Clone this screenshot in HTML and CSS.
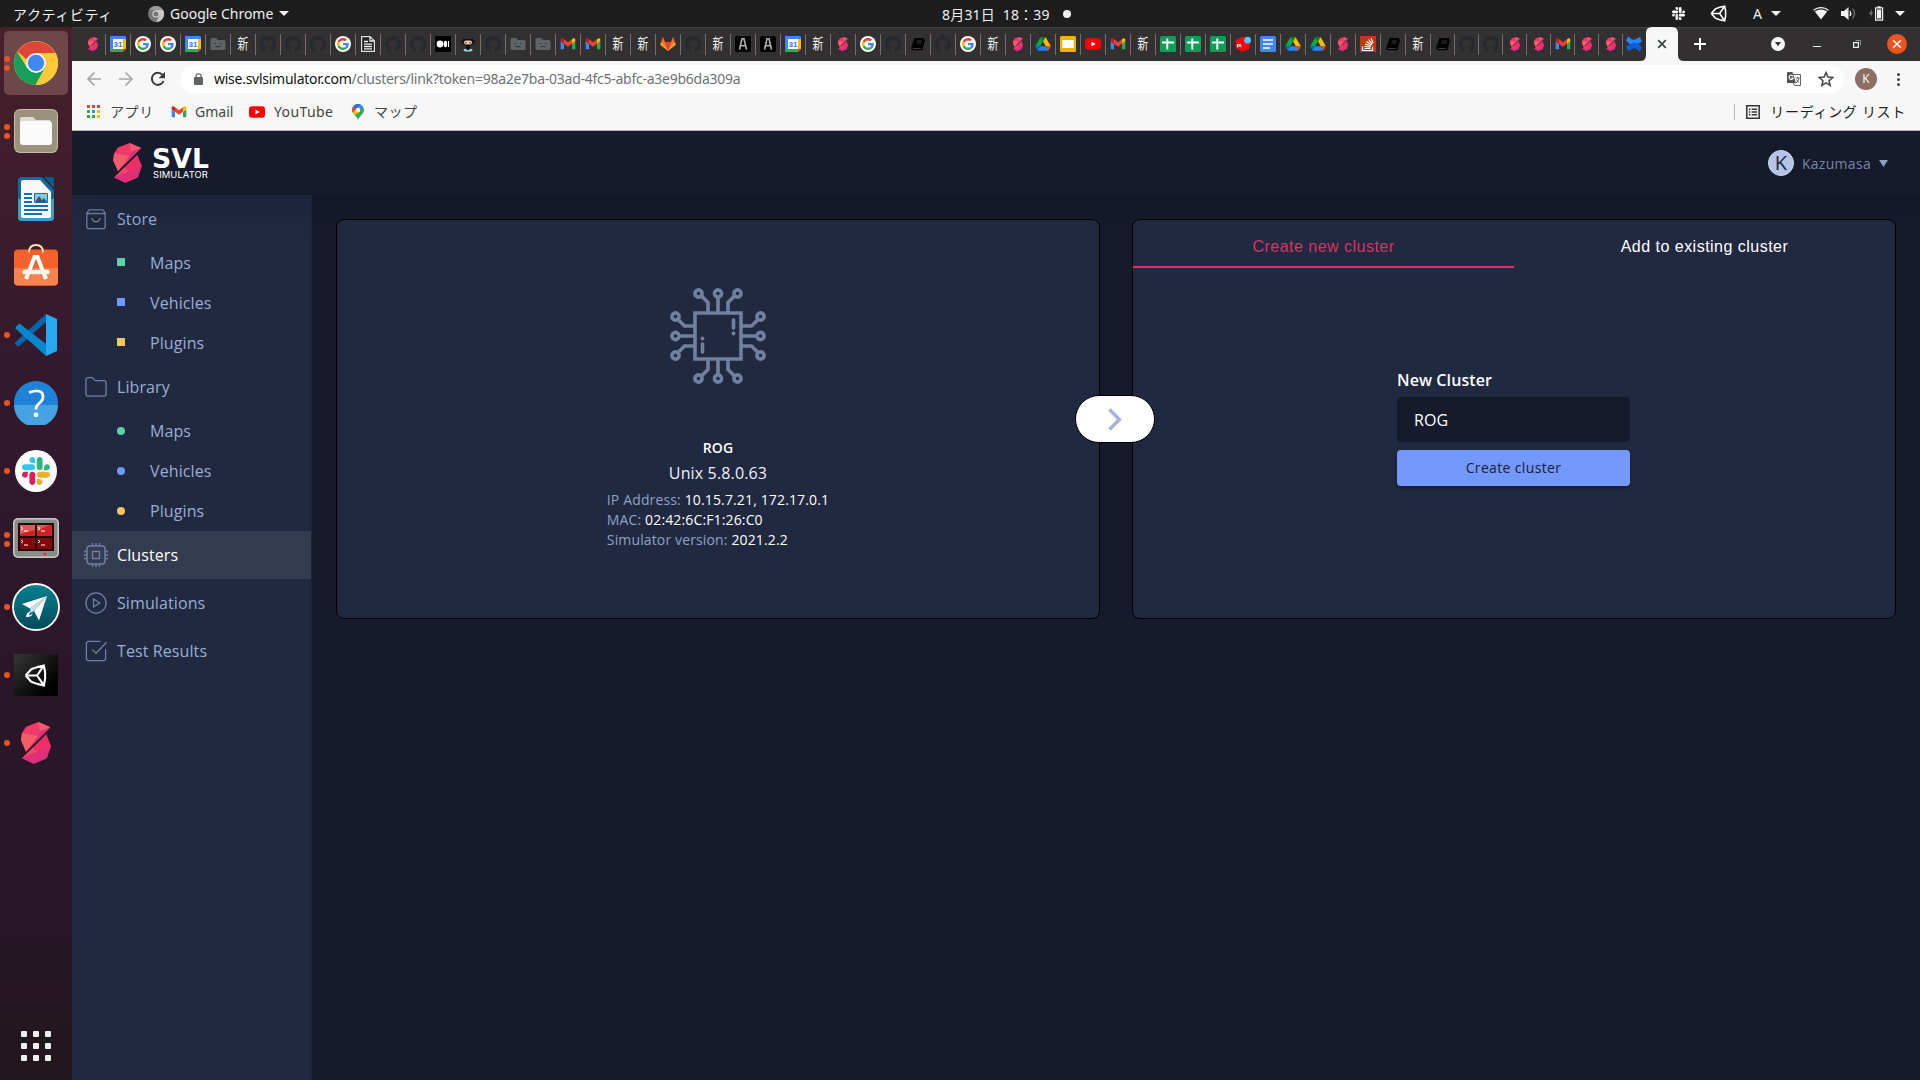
FILE: index.html
```
<!DOCTYPE html>
<html lang="ja">
<head>
<meta charset="utf-8">
<title>SVL Simulator</title>
<link rel="stylesheet" href="styles.css">
</head>
<body>
<svg class="defs" aria-hidden="true">
  <symbol id="svl" viewBox="0 0 30 42">
    <path fill="#f03a68" d="M17.3 0 29.3 5.3 5 29.7 0 18 1 11 5 4.7z"/>
    <path fill="#f25c6b" d="M17.3 0 29.3 5.3 19 9.5zM1 11 17 13.5 5 29.7 0 18z"/>
    <path fill="#d9327c" d="M29.3 5.3 14.5 20.3 19 9.5z"/>
    <path fill="#f02f67" d="M1 36.3 25.3 12.3 30 24 25.7 36.3 12.7 41.7z"/>
    <path fill="#f04868" d="M1 36.3 12 25.5 16 30z"/>
    <path fill="#dd3079" d="M1 36.3 16 30 30 24 25.7 36.3 12.7 41.7z"/>
  </symbol>
  <symbol id="cal" viewBox="0 0 16 16">
    <path fill="#4285f4" d="M1 0h14a1 1 0 0 1 1 1v2H3v10H0V1a1 1 0 0 1 1-1z"/>
    <path fill="#fff" d="M3 3h10v10H3z"/><path fill="#fbbc04" d="M13 3h3v10h-3z"/>
    <path fill="#34a853" d="M0 13h13v3H1a1 1 0 0 1-1-1z"/><path fill="#ea4335" d="M13 13h3l-3 3z"/>
    <text x="8" y="11" font-size="8" font-weight="700" text-anchor="middle" fill="#3275e0">31</text>
  </symbol>
  <symbol id="goo" viewBox="-8 -8 64 64">
    <circle cx="24" cy="24" r="32" fill="#fff"/>
    <path fill="#ea4335" d="M24 9.500c3.540 0 6.710 1.220 9.210 3.600l6.850-6.850C35.900 2.380 30.470 0 24 0 14.620 0 6.510 5.380 2.560 13.220l7.980 6.190C12.430 13.720 17.740 9.500 24 9.500z"/>
    <path fill="#4285f4" d="M46.980 24.550c0-1.570-.150-3.090-.380-4.550H24v9.020h12.940c-.580 2.960-2.260 5.480-4.780 7.180l7.730 6c4.510-4.180 7.090-10.360 7.090-17.650z"/>
    <path fill="#fbbc05" d="M10.530 28.590c-.480-1.450-.760-2.990-.760-4.590s.270-3.140.760-4.590l-7.980-6.190C.920 16.460 0 20.120 0 24c0 3.880.920 7.540 2.560 10.780z"/>
    <path fill="#34a853" d="M24 48c6.480 0 11.930-2.130 15.890-5.810l-7.730-6c-2.150 1.450-4.920 2.300-8.160 2.300-6.260 0-11.570-4.220-13.470-9.910l-7.980 6.190C6.510 42.620 14.620 48 24 48z"/>
  </symbol>
  <symbol id="sad" viewBox="0 0 16 16">
    <path fill="#5f6368" d="M2 2h4l2 2h6a1.500 1.500 0 0 1 1.500 1.500v7A1.500 1.500 0 0 1 14 14H2a1.500 1.500 0 0 1-1.500-1.500v-9A1.500 1.500 0 0 1 2 2z"/>
    <path fill="none" stroke="#333031" d="M4.500 7.500h1.500M10 7.500h1.500M6 11.500V10.500h4v1"/>
  </symbol>
  <symbol id="shin" viewBox="0 0 16 16"><text x="8" y="13.300" font-size="15" text-anchor="middle" fill="#f1f1f1" class="kanji">新</text></symbol>
  <symbol id="git" viewBox="0 0 16 16"><path fill="#24292e" d="M8 0C3.580 0 0 3.580 0 8c0 3.540 2.290 6.530 5.470 7.590.400.070.550-.170.550-.380 0-.190-.010-.820-.010-1.490-2.010.370-2.530-.490-2.690-.940-.090-.230-.480-.940-.820-1.130-.280-.150-.680-.520-.010-.530.630-.010 1.080.580 1.230.820.720 1.210 1.870.870 2.330.660.070-.520.280-.870.510-1.070-1.780-.200-3.640-.890-3.640-3.950 0-.870.310-1.590.820-2.150-.080-.200-.360-1.020.080-2.120 0 0 .670-.210 2.200.820.640-.180 1.320-.270 2-.270s1.360.090 2 .270c1.530-1.040 2.200-.820 2.200-.820.440 1.100.160 1.920.080 2.120.510.560.820 1.270.820 2.150 0 3.070-1.870 3.750-3.650 3.950.290.250.540.730.540 1.480 0 1.070-.010 1.930-.010 2.200 0 .210.150.460.550.380A8.010 8.010 0 0 0 16 8c0-4.420-3.580-8-8-8z"/></symbol>
  <symbol id="doc" viewBox="0 0 16 16"><path fill="#222" stroke="#ddd" stroke-width="1.200" d="M1.600.6h8.400l4.400 4.400v10.400H1.600z"/><path stroke="#eee" stroke-width="1.300" fill="none" d="M10 .6V5h4.400M4 5.500h4M4 8.200h8M4 10.500h8M4 12.800h8"/></symbol>
  <symbol id="med" viewBox="0 0 16 16"><rect width="16" height="16" rx="1" fill="#000"/><circle cx="5" cy="8" r="3.400" fill="#fff"/><ellipse cx="10.500" cy="8" rx="1.700" ry="3.200" fill="#fff"/><path fill="#fff" d="M13 5h1v6h-1z"/></symbol>
  <symbol id="octo" viewBox="0 0 16 16"><path d="M3 2l2 1h6l2-1 .5 4L12 9H4L2.500 6z" fill="#111"/><rect x="4" y="4.500" width="8" height="4" rx="2" fill="#f0c4a8"/><path d="M5.500 6h1v1.500h-1zM9.500 6h1v1.500h-1z" fill="#5a2c1c"/><path d="M6 9h4v4H6z" fill="#111"/><ellipse cx="8" cy="14" rx="4.500" ry="1.500" fill="#8edcf0"/><path d="M6.500 10h3v4h-3z" fill="#111"/><path d="M0 5h3M13 5h3M1 8l2-1M15 8l-2-1" stroke="#111"/></symbol>
  <symbol id="gmail" viewBox="48 38 96 76">
    <path fill="#4285f4" d="M58 108h14V74L52 59v43c0 3.320 2.690 6 6 6"/><path fill="#34a853" d="M120 108h14c3.320 0 6-2.690 6-6V59l-20 15"/><path fill="#fbbc04" d="M120 48v26l20-15v-8c0-7.420-8.470-11.650-14.400-7.200"/><path fill="#ea4335" d="M72 74V48l24 18 24-18v26L96 92"/><path fill="#c5221f" d="M52 51v8l20 15V48l-5.600-4.200c-5.940-4.450-14.400-.220-14.400 7.200"/>
  </symbol>
  <symbol id="lab" viewBox="0 0 16 16"><path fill="#fc6d26" d="M.2 8.500 3 1l2 5h6l2-5 2.800 7.500L8 15z"/><path fill="#e24329" d="M5 6h6l-3 9z"/><path fill="#fca326" d="M.2 8.500 2 6l6 9zM15.800 8.500 14 6l-6 9z"/></symbol>
  <symbol id="aa" viewBox="0 0 16 16"><rect width="16" height="16" rx="2" fill="#000"/><path d="M4.500 13.500 7 2.700h2l2.500 10.800M5.500 9.700h5" fill="none" stroke="#aeb2b4" stroke-width="1.600"/></symbol>
  <symbol id="book" viewBox="0 0 16 16"><path d="M5.200 2h9l-2.500 10H3z"/><path d="M5.200 2 2 11.500q-.300 2 1.500 2h8.200l2.800-10" fill="none" stroke="#000" stroke-width="1.400"/><path stroke="#444" stroke-width=".8" d="M7 5h5M6.500 7h5M3.500 12.500h7"/></symbol>
  <symbol id="drive" viewBox="-2 -6 91.300 91">
    <path fill="#0066da" d="m6.600 66.850 3.850 6.650c.8 1.400 1.950 2.500 3.300 3.300l13.750-23.800H0c0 1.550.4 3.100 1.200 4.500z"/><path fill="#00ac47" d="M43.650 25 29.900 1.200c-1.350.8-2.500 1.900-3.300 3.300l-25.400 44A9.060 9.060 0 0 0 0 53h27.500z"/><path fill="#ea4335" d="M73.550 76.800c1.350-.8 2.500-1.900 3.300-3.300l9.250-16c.8-1.400 1.200-2.950 1.200-4.500H59.800l5.850 11.500z"/><path fill="#00832d" d="M43.650 25 57.400 1.200C56.050.4 54.500 0 52.900 0H34.400c-1.600 0-3.150.45-4.500 1.200z"/><path fill="#2684fc" d="M59.800 53H27.500L13.750 76.800c1.350.8 2.900 1.200 4.500 1.200h50.800c1.600 0 3.150-.45 4.500-1.200z"/><path fill="#ffba00" d="M73.400 26.500 60.700 4.500c-.8-1.400-1.950-2.500-3.300-3.300L43.650 25 59.800 53h27.450c0-1.550-.4-3.100-1.200-4.500z"/>
  </symbol>
  <symbol id="slides" viewBox="0 0 16 16"><rect width="16" height="16" rx="1.500" fill="#f4b400"/><path fill="#fff" d="M2.300 4h11.400v8H2.300z"/></symbol>
  <symbol id="yt" viewBox="0 0 16 16"><rect y="2.200" width="16" height="11.600" rx="3" fill="#f00"/><path fill="#fff" d="m6.500 5.500 4.200 2.500-4.200 2.500z"/></symbol>
  <symbol id="sheet" viewBox="0 0 16 16"><rect width="16" height="16" rx="1.500" fill="#0f9d58"/><path stroke="#fff" stroke-width="1.900" d="M2 6.500h12M7.300 2.500v11"/></symbol>
  <symbol id="merc" viewBox="0 0 16 16"><path fill="#ff0211" d="M7.500.5 14.500 4v8.500l-7 3.500L.5 12V4z"/><path fill="none" stroke="#fff" d="M2.500 11.500V8.500q1.500-1 1.700.5v2m0-2q1.500-1.500 1.700.3v2"/><circle cx="12.600" cy="4.200" r="3.400" fill="#4dc9ff"/></symbol>
  <symbol id="gdoc" viewBox="0 0 16 16"><rect width="16" height="16" rx="1.500" fill="#4285f4"/><path stroke="#fff" stroke-width="1.700" d="M3 4h10M3 8h10M3 12h7"/></symbol>
  <symbol id="so" viewBox="0 0 16 16"><path fill="#c23616" d="M0 0h16v16H0z"/><path fill="none" stroke="#fff" stroke-width="1.200" d="M2.500 10.500v4h10v-4M4.500 12.500h6M4.500 10.500l6 .7M5 8l5.800 2M6.500 5.500l5 3.500M8.500 3.500l3.700 4.700M11 2l2 5"/></symbol>
  <symbol id="conf" viewBox="0 0 16 16"><path fill="#2684ff" d="M2.500.3Q5.500 5 9 3.500L14 1l2 4.700-6 3Q4.500 11 0 4.300z"/><path fill="#0a5fdc" d="M13.500 15.700Q10.500 11 7 12.500L2 15 0 10.300l6-3Q11.500 5 16 11.700z"/></symbol>
  <symbol id="slack" viewBox="0 0 122.800 122.800">
    <path class="s1" d="M25.800 77.600c0 7.100-5.800 12.900-12.900 12.900S0 84.700 0 77.600s5.800-12.900 12.900-12.900h12.900v12.900zm6.500 0c0-7.100 5.800-12.900 12.900-12.900s12.900 5.800 12.900 12.900v32.300c0 7.100-5.800 12.900-12.900 12.900s-12.900-5.800-12.900-12.900V77.600z"/><path class="s2" d="M45.200 25.800c-7.100 0-12.900-5.800-12.900-12.900S38.100 0 45.200 0s12.900 5.800 12.900 12.900v12.900H45.200zm0 6.500c7.100 0 12.900 5.800 12.900 12.900s-5.800 12.900-12.900 12.900H12.900C5.800 58.100 0 52.300 0 45.200s5.800-12.900 12.900-12.900h32.300z"/><path class="s3" d="M97 45.200c0-7.100 5.800-12.900 12.900-12.900s12.900 5.800 12.900 12.900-5.800 12.900-12.900 12.900H97V45.200zm-6.500 0c0 7.100-5.800 12.900-12.900 12.900s-12.900-5.800-12.900-12.900V12.900C64.700 5.800 70.500 0 77.600 0s12.900 5.800 12.900 12.900v32.300z"/><path class="s4" d="M77.600 97c7.100 0 12.900 5.800 12.900 12.900s-5.800 12.900-12.900 12.900-12.900-5.800-12.900-12.900V97h12.900zm0-6.500c-7.100 0-12.900-5.800-12.900-12.900s5.800-12.900 12.900-12.900h32.300c7.100 0 12.900 5.800 12.900 12.900s-5.800 12.900-12.900 12.900H77.600z"/>
  </symbol>
  <symbol id="unity" viewBox="0 0 22 22"><path fill="none" stroke="#fff" stroke-width="2" d="M1.500 11 7 5l5.500-2M1.500 11 7 17l5.500 2M12.500 3l6.500-1.500 1.200 6.500v6L19 20.500 12.500 19M1.500 11h11l6.500-9.500M12.500 11l6.500 9.500"/></symbol>
  <symbol id="down" viewBox="0 0 10 5"><path fill="#f2f2f2" d="M0 0h10L5 5z"/></symbol>
</svg>

<header class="topbar">
  <span class="activities">アクティビティ</span>
  <svg class="tb-chrome" viewBox="0 0 16 16"><circle cx="8" cy="8" r="8" fill="#777"/><path fill="#c8c8c8" d="M8 4h7A8 8 0 0 1 8 16l3.500-6z"/><path fill="#999" d="M1 4a8 8 0 0 1 14 0H8z"/><circle cx="8" cy="8" r="3.600" fill="#ddd"/><circle cx="8" cy="8" r="2.600" fill="#777"/></svg>
  <span class="appname">Google Chrome</span>
  <svg class="tri"><use href="#down"/></svg>
  <span class="clock">8月31日&nbsp; 18：39</span>
  <i class="notify"></i>
  <div class="tray">
    <svg class="t-slack"><use href="#slack"/></svg>
    <svg class="t-unity"><use href="#unity"/></svg>
    <span class="t-a">A</span>
    <svg class="tri t-tri1"><use href="#down"/></svg>
    <svg class="t-wifi" viewBox="0 0 16 13"><path fill="#f2f2f2" d="M1.800 4.500Q8 .5 14.200 4.500L8 12.500z"/><path fill="none" stroke="#f2f2f2" stroke-width="1.200" d="M.5 3.200Q8-2 15.500 3.200"/></svg>
    <svg class="t-vol" viewBox="0 0 15 13"><path fill="#f2f2f2" d="M0 4h3l4.500-4v13L3 9H0z"/><path fill="none" stroke="#f2f2f2" stroke-width="1.300" d="M9 4q1.600 2.500 0 5"/><path fill="none" stroke="#777" stroke-width="1.200" d="M11.500 1.500q4 5 0 10"/></svg>
    <svg class="t-bat" viewBox="0 0 15 15"><path fill="#777" d="M3 3 0 8h2l-1 4 3-5.500H2.500z"/><path fill="none" stroke="#f2f2f2" stroke-width="1.200" d="M6.600 1.800h7v12.400h-7zM8.500.8h3.200"/><path fill="#f2f2f2" d="M8 3.500h4.200v9H8z"/></svg>
    <svg class="tri"><use href="#down"/></svg>
  </div>
</header>

<div class="desktop">
<nav class="dock">
  <div class="app active"><i class="run two"></i><svg width="44" height="44" viewBox="0 0 44 44"><circle cx="22" cy="22" r="22" fill="#fdc93a"/><path fill="#e0453a" d="M3.500 10.500A22 22 0 0 1 41.200 12H22L12 18z"/><path fill="#169f5b" d="M3.200 10.800A22 22 0 0 0 21.500 44L31 27 22 32 13 27z"/><path fill="#fdc93a" d="M22 12h19.600A22 22 0 0 1 21.500 44L31 27z"/><circle cx="22" cy="22" r="10" fill="#f4f4f4"/><circle cx="22" cy="22" r="8.200" fill="#4387f5"/></svg></div>
  <div class="app"><i class="run two"></i><svg width="44" height="44" viewBox="0 0 44 44"><rect width="44" height="44" rx="6" fill="#c4bda8"/><rect x="1" y="1" width="42" height="42" rx="5" fill="#9a927e"/><path fill="#dedad0" d="M8 8h11l3 3h14v8H6v-9q0-2 2-2z"/><rect x="6" y="12" width="32" height="24" rx="3" fill="#fbfafa"/></svg></div>
  <div class="app"><svg width="36" height="44" viewBox="0 0 36 44"><path fill="#0d6d9f" d="M4 0h20l12 13v27q0 4-4 4H4q-4 0-4-4V4q0-4 4-4z"/><path fill="#3b9fcb" d="M0 22h36v18q0 4-4 4H4q-4 0-4-4z"/><path fill="#f8f8f8" d="M5 3h17l11 12v24q0 2-2 2H5q-2 0-2-2V5q0-2 2-2z"/><path fill="#0a5d8c" d="M26 0h8q2 0 2 2v9z"/><path stroke="#1272b0" stroke-width="2" d="M6 17h8M6 21h8M6 25h8M6 29h24M6 33h24M6 37h18"/><path fill="#80c9ef" stroke="#1272b0" d="M16.500 16.500h13v9h-13z"/><path fill="#44565f" d="m17 25 4-6 3 4 2-2 3 4z"/><path fill="#f0c02c" d="M26 17h3v3z"/></svg></div>
  <div class="app"><svg class="soft" width="44" height="42" viewBox="0 0 44 42"><rect y="5.500" width="44" height="36" rx="4" fill="#f5612a"/><path fill="#f88150" d="M0 24h44v13.500q0 4-4 4H4q-4 0-4-4z"/><path fill="none" stroke="#ffe0b5" stroke-width="1.800" d="M15 8.500Q15 1 22 1t7 7.500"/><path fill="none" stroke="#fff" stroke-width="4" d="m12 35 8.500-22h3L32 35"/><path stroke="#fff4ec" stroke-width="4.600" stroke-linecap="round" d="M10.500 28h23"/></svg></div>
  <div class="app"><i class="run"></i><svg width="42" height="42" viewBox="0 0 42 42"><path fill="#0065a9" d="M0 28.500q-.5 1 .5 2l3 2.300L31 8V0z"/><path fill="#0788cc" d="m1 12.500 3.500-3L31 30v12L.5 14.500z"/><path fill="#27a9f2" d="m31 0 11 5v32l-11 5z"/></svg></div>
  <div class="app"><i class="run"></i><svg width="44" height="44" viewBox="0 0 44 44"><circle cx="22" cy="22" r="22" fill="#2081d8"/><path fill="#46a2e2" d="M0 24h44a22 22 0 0 1-44 0z"/><path fill="none" stroke="#fff" stroke-width="2.800" d="M15 11.500q14-4.500 14 4 0 4-4.500 7.500-2.500 2-2.500 5.500"/><circle cx="22" cy="33.800" r="2.400" fill="#fff"/></svg></div>
  <div class="app"><i class="run"></i><span class="slackdisc"><svg width="28" height="28"><use href="#slack"/></svg></span></div>
  <div class="app"><i class="run two"></i><svg class="term" width="46" height="40" viewBox="0 0 46 40"><rect width="46" height="40" rx="5" fill="#c9c9c5"/><rect x="1.500" y="1.500" width="43" height="37" rx="4" fill="#8b8c87"/><path fill="#240505" d="M5 5h36v28H5z"/><path fill="#cf2323" d="M7 7h15v11H7zM24 7h15v11H24z"/><path fill="#850808" d="M7 20h15v11H7zM24 20h15v11H24z"/><path fill="#e25757" d="M7 7h15v5L7 16zM24 7h12l-12 6z"/><path fill="none" stroke="#fff" d="m8 9 2 1.500L8 12M11 13h4M25 9l2 1.500-2 1.500M28 13h4M8 22l2 1.500L8 25M11 27h4M25 22l2 1.500-2 1.500M28 27h4"/><circle cx="32" cy="36" r="1.300" fill="#e22"/></svg></div>
  <div class="app"><i class="run"></i><svg width="48" height="48" viewBox="0 0 48 48"><defs><linearGradient id="teal" x2="0" y2="1"><stop stop-color="#078290"/><stop offset="1" stop-color="#034a58"/></linearGradient></defs><circle cx="24" cy="24" r="23" fill="url(#teal)" stroke="#fff" stroke-width="1.800"/><path fill="#fff" d="M35 13 10 21l8 4.500zM35 13 22 28l5 9.500z"/><path fill="#c7dfe2" d="M35 13 18 25.500l.5 4.500 3.500-2z"/><path fill="#fff" d="M14 34q0-4 4.500-6l-1.500 4.500 4-2q-2 4-7 3.500z"/></svg></div>
  <div class="app"><i class="run"></i><span class="unitybox"><svg width="23" height="23"><use href="#unity"/></svg></span></div>
  <div class="app"><i class="run"></i><svg width="30" height="42"><use href="#svl"/></svg></div>
  <div class="launcher"><i></i><i></i><i></i><i></i><i></i><i></i><i></i><i></i><i></i></div>
</nav>

<div class="browser">
  <div class="tabstrip">
    <b class="tab"><svg class="sm"><use href="#svl"/></svg></b><b class="tab"><svg><use href="#cal"/></svg></b><b class="tab"><svg><use href="#goo"/></svg></b><b class="tab"><svg><use href="#goo"/></svg></b><b class="tab"><svg><use href="#cal"/></svg></b><b class="tab"><svg><use href="#sad"/></svg></b><b class="tab"><svg><use href="#shin"/></svg></b><b class="tab"><svg><use href="#git"/></svg></b><b class="tab"><svg><use href="#git"/></svg></b><b class="tab"><svg><use href="#git"/></svg></b>
    <b class="tab"><svg><use href="#goo"/></svg></b><b class="tab"><svg><use href="#doc"/></svg></b><b class="tab"><svg><use href="#git"/></svg></b><b class="tab"><svg><use href="#git"/></svg></b><b class="tab"><svg><use href="#med"/></svg></b><b class="tab"><svg><use href="#octo"/></svg></b><b class="tab"><svg><use href="#git"/></svg></b><b class="tab"><svg><use href="#sad"/></svg></b><b class="tab"><svg><use href="#sad"/></svg></b><b class="tab"><svg><use href="#gmail"/></svg></b>
    <b class="tab"><svg><use href="#gmail"/></svg></b><b class="tab"><svg><use href="#shin"/></svg></b><b class="tab"><svg><use href="#shin"/></svg></b><b class="tab"><svg><use href="#lab"/></svg></b><b class="tab"><svg><use href="#git"/></svg></b><b class="tab"><svg><use href="#shin"/></svg></b><b class="tab"><svg><use href="#aa"/></svg></b><b class="tab"><svg><use href="#aa"/></svg></b><b class="tab"><svg><use href="#cal"/></svg></b><b class="tab"><svg><use href="#shin"/></svg></b>
    <b class="tab"><svg class="sm"><use href="#svl"/></svg></b><b class="tab"><svg><use href="#goo"/></svg></b><b class="tab"><svg><use href="#git"/></svg></b><b class="tab"><svg><use href="#book"/></svg></b><b class="tab"><svg><use href="#git"/></svg></b><b class="tab"><svg><use href="#goo"/></svg></b><b class="tab"><svg><use href="#shin"/></svg></b><b class="tab"><svg class="sm"><use href="#svl"/></svg></b><b class="tab"><svg><use href="#drive"/></svg></b><b class="tab"><svg><use href="#slides"/></svg></b>
    <b class="tab"><svg><use href="#yt"/></svg></b><b class="tab"><svg><use href="#gmail"/></svg></b><b class="tab"><svg><use href="#shin"/></svg></b><b class="tab"><svg><use href="#sheet"/></svg></b><b class="tab"><svg><use href="#sheet"/></svg></b><b class="tab"><svg><use href="#sheet"/></svg></b><b class="tab"><svg><use href="#merc"/></svg></b><b class="tab"><svg><use href="#gdoc"/></svg></b><b class="tab"><svg><use href="#drive"/></svg></b><b class="tab"><svg><use href="#drive"/></svg></b>
    <b class="tab"><svg class="sm"><use href="#svl"/></svg></b><b class="tab"><svg><use href="#so"/></svg></b><b class="tab"><svg><use href="#book"/></svg></b><b class="tab"><svg><use href="#shin"/></svg></b><b class="tab n"><svg><use href="#book"/></svg></b><b class="tab n"><svg><use href="#git"/></svg></b><b class="tab n"><svg><use href="#git"/></svg></b><b class="tab n"><svg class="sm"><use href="#svl"/></svg></b><b class="tab n"><svg class="sm"><use href="#svl"/></svg></b><b class="tab n"><svg><use href="#gmail"/></svg></b>
    <b class="tab n"><svg class="sm"><use href="#svl"/></svg></b><b class="tab n"><svg class="sm"><use href="#svl"/></svg></b><b class="tab last"><svg><use href="#conf"/></svg></b>
    <div class="tab-active"><svg width="44" height="34" viewBox="0 0 44 34"><path fill="#f7f7f7" d="M0 34q6 0 6-6V6q0-6 6-6h20q6 0 6 6v22q0 6 6 6z"/><path stroke="#3c4043" stroke-width="1.700" d="m18.200 13.200 7.600 7.600m0-7.600-7.600 7.600"/></svg></div>
    <svg class="plus" viewBox="0 0 12 12"><path stroke="#fff" stroke-width="2" d="M6 0v12M0 6h12"/></svg>
    <div class="winctl">
      <svg class="w-search" viewBox="0 0 14 14"><circle cx="7" cy="7" r="7" fill="#f7f7f7"/><path fill="#333" d="M4 5h6L7 9.200z"/></svg>
      <i class="w-min"></i>
      <svg class="w-max" viewBox="0 0 8 8"><path fill="none" stroke="#eee" stroke-width="1.200" d="M.6 2.600h4.800v4.800H.6z"/><path fill="none" stroke="#aaa" stroke-width=".8" d="M2.500.5h5v5"/></svg>
      <svg class="w-close" viewBox="0 0 20 20"><circle cx="10" cy="10" r="10" fill="#e95420"/><path stroke="#fff" stroke-width="1.500" d="m6.200 6.200 7.600 7.600m0-7.600-7.600 7.600"/></svg>
    </div>
  </div>

  <div class="toolbar">
    <svg class="nav-i" viewBox="0 0 16 16"><path fill="none" stroke="#a5a5a5" stroke-width="1.700" d="M15 8H2M8.500 1.500 2 8l6.500 6.500"/></svg>
    <svg class="nav-i" viewBox="0 0 16 16"><path fill="none" stroke="#a5a5a5" stroke-width="1.700" d="M1 8h13M7.500 1.500 14 8l-6.500 6.500"/></svg>
    <svg class="nav-i" viewBox="0 0 16 16"><path fill="none" stroke="#3c3c3c" stroke-width="2" d="M13.500 10A6 6 0 1 1 12.500 4"/><path fill="#3c3c3c" d="M15 .8v6.400H8.600z"/></svg>
    <div class="omnibox">
      <svg class="lock" viewBox="0 0 9 12"><rect y="4" width="9" height="8" rx="1" fill="#5f6368"/><path fill="none" stroke="#5f6368" stroke-width="1.200" d="M2 5V2.800q0-2 2.500-2T7 2.800V5"/></svg>
      <span class="url"><em>wise.svlsimulator.com</em>/clusters/link?token=98a2e7ba-03ad-4fc5-abfc-a3e9b6da309a</span>
      <svg class="trans" viewBox="0 0 14 14"><path fill="none" stroke="#666" d="M5 2.500h8.500v11H7.500L6 11"/><path fill="#555" d="M.5 0h5l3.500 11H.5q-.5 0-.5-.5V.5z"/><path fill="none" stroke="#fff" stroke-width="1.100" d="M6 4q-3-2-4 1.200Q3.500 9 6 6.500V6H4.300"/><path fill="none" stroke="#666" d="M8.500 6h4M10.500 5v1M9 11q3-2 3-5M9.500 7.500l2.500 3"/></svg>
      <svg class="star" viewBox="0 0 24 24"><path fill="none" stroke="#4a4a4a" stroke-width="2.400" d="m12 2.500 2.900 6.600 7.100.7-5.400 4.700 1.600 7-6.200-3.700L5.800 21.500l1.600-7L2 9.800l7.100-.7z"/></svg>
    </div>
    <span class="profile">K</span>
    <span class="kebab"><i></i><i></i><i></i></span>
  </div>

  <div class="bookmarks">
    <svg class="b-apps" viewBox="0 0 13 13"><path fill="#ea4335" d="M0 0h3v3H0zM5 0h3v3H5zM10 0h3v3h-3z"/><path fill="#34a853" d="M0 5h3v3H0zM0 10h3v3H0zM5 10h3v3H5z"/><path fill="#4285f4" d="M5 5h3v3H5z"/><path fill="#fbbc04" d="M10 5h3v3h-3zM10 10h3v3h-3z"/></svg>
    <span class="b-t1">アプリ</span>
    <svg class="b-ic"><use href="#gmail"/></svg><span class="b-t2">Gmail</span>
    <svg class="b-ic"><use href="#yt"/></svg><span class="b-t3">YouTube</span>
    <svg class="b-map" viewBox="0 0 12 16"><path fill="#34a853" d="M0 6a6 6 0 0 1 12 0c0 4-4 5-6 10C5 11.500 0 10 0 6z"/><path fill="#4285f4" d="M4 .4A6 6 0 0 1 11.300 3.200L7 8z"/><path fill="#1a73e8" d="M1.300 2.200 4.500 5 8 .4Q4-.8 1.300 2.200z"/><path fill="#ea4335" d="M1.300 2.200Q-.7 5 .6 8.500L4.500 5z"/><path fill="#fbbc04" d="M.6 8.500 2.800 11 8.500 7.500 4.500 5z"/><circle cx="6" cy="6" r="2.200" fill="#fff"/></svg>
    <span class="b-t4">マップ</span>
    <div class="reading"><svg viewBox="0 0 14 14"><path fill="none" stroke="#333" stroke-width="1.500" d="M.8.8h12.400v12.400H.8z"/><path stroke="#333" stroke-width="1.400" d="M3 4.200h1.500M3 7h1.500M3 9.800h1.500M5.700 4.200H11M5.700 7H11M5.700 9.800H11"/></svg><span>リーディング リスト</span></div>
  </div>

  <div class="page">
    <header class="head">
      <svg class="logo" width="96" height="40" viewBox="0 0 96 40">
        <svg width="29" height="40"><use href="#svl"/></svg>
        <text x="39" y="24.500" class="lg-a" textLength="57" lengthAdjust="spacingAndGlyphs">SVL</text>
        <text x="40" y="35" class="lg-b" textLength="55" lengthAdjust="spacingAndGlyphs">SIMULATOR</text>
      </svg>
      <div class="user"><span class="av">K</span><span class="uname">Kazumasa</span><svg viewBox="0 0 9 7"><path fill="#8e9dc4" d="M0 0h9L4.500 7z"/></svg></div>
    </header>
    <div class="body">
      <aside class="side">
        <a class="item"><svg viewBox="0 0 24 24"><path d="M4.500 2h15L22 5.500V20a2.500 2.500 0 0 1-2.500 2.500h-15A2.500 2.500 0 0 1 2 20V5.500zM2 6h20M7.500 11q1 4 4.500 4t4.500-4"/></svg>Store</a>
        <a class="sub"><i class="g"></i>Maps</a><a class="sub"><i class="b"></i>Vehicles</a><a class="sub"><i class="y"></i>Plugins</a>
        <a class="item"><svg viewBox="0 0 24 24"><path d="M1 4a2.300 2.300 0 0 1 2.300-2.300H8L11 5h9.700A2.300 2.300 0 0 1 23 7.300v12.400a2.300 2.300 0 0 1-2.300 2.300H3.300A2.300 2.300 0 0 1 1 19.700z"/></svg>Library</a>
        <a class="sub"><i class="g r"></i>Maps</a><a class="sub"><i class="b r"></i>Vehicles</a><a class="sub"><i class="y r"></i>Plugins</a>
        <a class="item on"><svg viewBox="0 0 24 24"><path d="M6 3h12a3 3 0 0 1 3 3v12a3 3 0 0 1-3 3H6a3 3 0 0 1-3-3V6a3 3 0 0 1 3-3zM8.500 8.500h7v7h-7zM8.500 0v3M12 0v3M15.500 0v3M8.500 21v3M12 21v3M15.500 21v3M0 8.500h3M0 12h3M0 15.500h3M21 8.500h3M21 12h3M21 15.500h3"/></svg>Clusters</a>
        <a class="item"><svg viewBox="0 0 24 24"><circle cx="12" cy="12" r="11"/><path d="M9.300 7.500v9l6.700-4.500z"/></svg>Simulations</a>
        <a class="item"><svg viewBox="0 0 24 24"><path d="M17 1.500H4A2.500 2.500 0 0 0 1.500 4v16A2.500 2.500 0 0 0 4 22.500h16a2.500 2.500 0 0 0 2.500-2.500v-10M8 10.500l4 4L23.500 2.500"/></svg>Test Results</a>
      </aside>
      <main class="main">
        <section class="card info">
          <svg class="chip" viewBox="0 0 96 96"><g fill="none" stroke="#71809f" stroke-width="3.600"><path d="M25 25h46v46H25zM48 9v16M48 71v16M9 48h16M71 48h16M38 25V14.500l-6.500-6.500M58 25V14.500l6.500-6.500M38 71v10.500L31.500 88M58 71v10.500l6.500 6.500M25 38H14.500L8 31.500M25 58H14.500L8 64.500M71 38h10.500l6.500-6.500M71 58h10.500l6.500 6.500"/><path stroke-linecap="round" d="M63.500 32v8M32.500 56v8"/></g><g fill="#202940" stroke="#71809f" stroke-width="3.600"><circle cx="28.500" cy="5.500" r="3.600"/><circle cx="48" cy="5.500" r="3.600"/><circle cx="67.500" cy="5.500" r="3.600"/><circle cx="28.500" cy="90.500" r="3.600"/><circle cx="48" cy="90.500" r="3.600"/><circle cx="67.500" cy="90.500" r="3.600"/><circle cx="5.500" cy="28.500" r="3.600"/><circle cx="5.500" cy="48" r="3.600"/><circle cx="5.500" cy="67.500" r="3.600"/><circle cx="90.500" cy="28.500" r="3.600"/><circle cx="90.500" cy="48" r="3.600"/><circle cx="90.500" cy="67.500" r="3.600"/></g><g fill="#71809f"><circle cx="63.500" cy="45.500" r="1.900"/><circle cx="32.500" cy="50.500" r="1.900"/></g></svg>
          <h2>ROG</h2>
          <p class="os">Unix 5.8.0.63</p>
          <dl><div>IP Address: <b>10.15.7.21, 172.17.0.1</b></div><div>MAC: <b>02:42:6C:F1:26:C0</b></div><div>Simulator version: <b>2021.2.2</b></div></dl>
          <span class="pill"><svg width="14" height="23" viewBox="0 0 14 23"><path fill="none" stroke="#a5b5dc" stroke-width="3.600" d="M1.500 1.500 11.300 11.500 1.500 21.500"/></svg></span>
        </section>
        <section class="card">
          <div class="tabs"><a class="sel">Create new cluster</a><a>Add to existing cluster</a></div>
          <form class="form"><label>New Cluster</label><div class="input">ROG</div><div class="btn">Create cluster</div></form>
        </section>
      </main>
    </div>
  </div>
</div>
</div>
</body>
</html>
```
FILE: styles.css
```
* { box-sizing: border-box; }
body { margin: 0; width: 1920px; height: 1080px; overflow: hidden; display: flex; flex-direction: column; background: #151b2c; font-family: "Open Sans", "Noto Sans CJK JP", sans-serif; }
svg { display: block; flex: none; }
.defs { position: absolute; width: 0; height: 0; }
.defs text { font-family: "Liberation Sans", sans-serif; }
.defs .kanji { font-family: "Noto Sans CJK JP", sans-serif; font-weight: 400; transform: translate(8px, 0) scale(.72, 1) translate(-8px, 0); }
i, em { font-style: normal; }

/* system bar */
.topbar { height: 27px; flex: none; background: #1d1d1d; color: #f0f0f0; display: flex; align-items: center; padding-left: 13px; font: 14px/27px "Noto Sans", "Noto Sans CJK JP", sans-serif; white-space: nowrap; }
.activities { width: 103px; margin-right: 32px; padding-top: 2px; letter-spacing: .6px; }
.tb-chrome { width: 16px; height: 16px; margin-right: 6px; }
.appname { width: 103px; margin-right: 6px; }
.tri { width: 10px; height: 5px; }
.clock { width: 108px; margin-left: 653px; letter-spacing: .2px; padding-top: 2px; }
.notify { width: 8px; height: 8px; border-radius: 50%; background: #f0f0f0; margin-left: 13px; }
.tray { margin-left: auto; display: flex; align-items: center; padding-right: 15px; }
.t-slack { width: 13px; height: 13px; margin-right: 25px; filter: grayscale(1) brightness(3); }
.t-unity { width: 17px; height: 17px; margin-right: 26px; }
.t-a { width: 10px; margin-right: 8px; }
.t-tri1 { margin-right: 32px; }
.t-wifi { width: 16px; height: 13px; margin-right: 12px; }
.t-vol { width: 15px; height: 13px; margin-right: 13px; }
.t-bat { width: 15px; height: 15px; margin-right: 11px; }

.desktop { flex: 1; display: flex; min-height: 0; }
.s1 { fill: #e01e5a; } .s2 { fill: #36c5f0; } .s3 { fill: #2eb67d; } .s4 { fill: #ecb22e; }

/* dock */
.dock { width: 72px; flex: none; padding-top: 2px; display: flex; flex-direction: column; background: linear-gradient(#47202a, #31182d 38%, #2b162a 60%, #271727 85%, #23161c); }
.app { height: 68px; flex: none; display: flex; align-items: center; justify-content: center; position: relative; }
.app.active { height: 64px; width: 64px; margin: 2px 4px; border-radius: 5px; background: #6c484b; }
.run { position: absolute; left: 4px; top: 50%; margin-top: -3px; width: 6px; height: 6px; border-radius: 50%; background: #e95420; }
.active .run { left: 0; }
.two { margin-top: -7px; box-shadow: 0 9px #e95420; }
.soft { margin-bottom: 5px; }
.term { margin-bottom: 2px; }
.slackdisc { width: 42px; height: 42px; border-radius: 50%; background: #fff; display: flex; align-items: center; justify-content: center; }
.unitybox { width: 44px; height: 42px; background: linear-gradient(135deg, #383838, #000 80%); display: flex; align-items: center; padding-left: 10px; }
.launcher { margin: auto 0 19px 21px; display: grid; grid-template-columns: repeat(3, 6px); gap: 6px; }
.launcher i { height: 6px; border-radius: 1px; background: #f0f0ee; }

/* browser chrome */
.browser { flex: 1; display: flex; flex-direction: column; min-width: 0; }
.tabstrip { height: 34px; flex: none; display: flex; padding-left: 9px; background: #333031; border-top: 1px solid #454243; }
.tab { width: 25px; height: 32px; flex: none; display: flex; align-items: center; justify-content: center; background: linear-gradient(#716f6f, #716f6f) right 6px / 1px 21px no-repeat; }
.tab svg { width: 16px; height: 16px; margin-right: 1px; }
.tab svg.sm { height: 14px; }
.tab.n { width: 24px; }
.tab.last { width: 23px; background: none; }
.tab-active { width: 44px; height: 34px; margin: -1px 0 0 -6px; flex: none; }
.plus { width: 12px; height: 12px; margin: 10px 0 0 10px; }
.winctl { margin-left: auto; display: flex; align-items: center; padding-right: 13px; height: 32px; }
.w-search { width: 14px; height: 14px; margin-right: 28px; }
.w-min { width: 8px; height: 1px; background: #eee; margin: 5px 32px 0 0; }
.w-max { width: 8px; height: 8px; margin-right: 26px; }
.w-close { width: 20px; height: 20px; }
.toolbar { height: 36px; flex: none; background: #f7f7f7; display: flex; align-items: center; padding-left: 14px; }
.nav-i { width: 16px; height: 16px; margin-right: 16px; }
.omnibox { width: 1664px; height: 28px; margin-left: -2px; border-radius: 14px; background: #fff; display: flex; align-items: center; padding-left: 14px; font: 14px/28px "Noto Sans", sans-serif; letter-spacing: -.26px; color: #6e7276; }
.lock { width: 9px; height: 12px; margin-right: 11px; }
.url em { color: #111; }
.trans { width: 14px; height: 14px; margin-left: auto; }
.star { width: 16px; height: 16px; margin: 0 10px 0 17px; }
.profile { width: 22px; height: 22px; margin-left: 11px; border-radius: 50%; background: #8d6e63; color: #fff; font: 12px/22px "Open Sans", sans-serif; text-align: center; }
.kebab { width: 3px; margin-left: 20px; display: grid; gap: 2px; }
.kebab i { height: 3px; border-radius: 50%; background: #444; }
.bookmarks { height: 34px; flex: none; background: #f7f7f7; border-bottom: 1px solid #b5b5b5; display: flex; align-items: center; padding: 0 14px 4px 15px; font: 14px/28px "Noto Sans", "Noto Sans CJK JP", sans-serif; color: #444; white-space: nowrap; }
.b-apps { width: 13px; height: 13px; margin-right: 10px; }
.b-ic { width: 16px; height: 16px; margin-right: 8px; }
.b-t1 { width: 61px; letter-spacing: .6px; }
.b-t2 { width: 54px; }
.b-ic + .b-t3 { width: 78px; margin-left: 1px; letter-spacing: .4px; }
.b-map { width: 12px; height: 16px; margin-right: 10px; }
.b-t4 { letter-spacing: .5px; }
.reading { margin-left: auto; display: flex; align-items: center; color: #222; letter-spacing: .7px; background: linear-gradient(#bbb, #bbb) left center / 1px 16px no-repeat; padding-left: 12px; }
.reading svg { width: 14px; height: 14px; margin-right: 10px; }

/* application */
.page { flex: 1; display: flex; flex-direction: column; min-height: 0; letter-spacing: .1px; overflow: hidden; }
.head { height: 64px; flex: none; display: flex; align-items: center; justify-content: space-between; padding: 0 32px 0 41px; box-shadow: 0 2px 40px rgba(8, 12, 24, .3); background: #151b2c; position: relative; }
.logo text { fill: #fff; }
.logo .lg-a { font: 700 26px "DejaVu Sans", sans-serif; }
.logo .lg-b { font: 9px Inter, sans-serif; }
.user { display: flex; align-items: center; font-size: 14px; color: #7886a8; letter-spacing: .3px; }
.av { width: 26px; height: 26px; border-radius: 50%; background: #b5c3e6; border: 1px solid #c9def0; color: #1c2438; font: 20px/24px "Open Sans", sans-serif; text-align: center; margin-right: 8px; }
.user svg { width: 9px; height: 7px; margin-left: 8px; }
.body { flex: 1; display: flex; min-height: 0; }
.side { width: 240px; flex: none; background: #202940; border-right: 1px solid #1b2438; color: #9badd4; font-size: 16px; }
.item { height: 48px; display: flex; align-items: center; padding-left: 12px; }
.item svg { width: 24px; height: 24px; padding: 1px; margin-right: 9px; fill: none; stroke: #7181a5; stroke-width: 1.400; }
.item.on { background: #333b50; color: #fff; }
.item.on svg { padding: 0; }
.sub { height: 40px; display: flex; align-items: center; padding-left: 45px; }
.sub i { width: 8px; height: 8px; margin: -2px 25px 0 0; }
.sub .r { border-radius: 50%; margin-top: 0; }
.g { background: #5fd0a8; } .b { background: #7399ff; } .y { background: #f5c664; }
.main { flex: 1; display: grid; grid-template-columns: 1fr 1fr; gap: 32px; padding: 24px; align-items: start; }
.card { height: 400px; border: 1px solid #000; border-radius: 8px; background: #202940; position: relative; }
.info { display: flex; flex-direction: column; align-items: center; padding-top: 68px; }
.chip { width: 96px; height: 96px; }
.card h2 { margin: 54px 0 0; font: 600 14px/20px "Open Sans", sans-serif; color: #fff; }
.os { margin: 3px 0 5px; font-size: 16px; line-height: 24px; letter-spacing: .15px; color: #eef1f8; }
dl { margin: 0; font-size: 14px; line-height: 20px; letter-spacing: .14px; color: #8fa1c9; }
dl b { font-weight: 400; color: #fff; }
.pill { position: absolute; right: -56px; top: 175px; width: 80px; height: 48px; border: 1px solid #000; border-radius: 24px; background: #fff; display: flex; align-items: center; justify-content: center; z-index: 1; }
.tabs { display: flex; height: 48px; }
.tabs a { flex: 1; text-align: center; font: 16px/54px "Liberation Sans", Arial, sans-serif; letter-spacing: .48px; color: #fff; }
.tabs .sel { color: #d83463; border-bottom: 2px solid #d83463; }
.form { width: 233px; margin: 101px auto 0 264px; }
.form label { display: block; font: 600 16px/22px "Open Sans", sans-serif; color: #fff; height: 28px; }
.input { height: 45px; border-radius: 4px; background: #151b2c; color: #fff; padding-left: 17px; font-size: 16px; line-height: 46px; }
.btn { height: 36px; margin-top: 8px; border-radius: 4px; background: #7399ff; color: #182038; font-size: 14px; line-height: 36px; letter-spacing: .35px; text-align: center; box-shadow: 0 2px 4px rgba(0, 0, 0, .35); }
```
